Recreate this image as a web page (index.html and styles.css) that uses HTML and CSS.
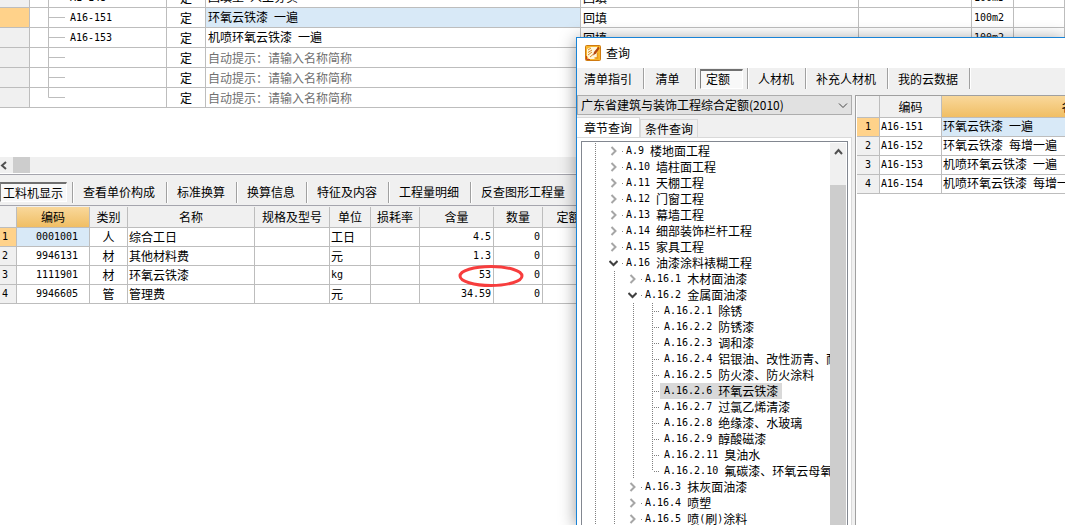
FILE: index.html
```html
<!DOCTYPE html>
<html lang="zh-CN">
<head>
<meta charset="utf-8">
<title>查询</title>
<link rel="stylesheet" href="styles.css">
</head>
<body>
<svg class="defs" aria-hidden="true">
  <symbol id="branch" viewBox="0 0 17 20"><path d="M.5 0V20M0 9.500H17" stroke="#bdbdbd" fill="none"/></symbol>
  <symbol id="branch-end" viewBox="0 0 17 20"><path d="M.5 0V9.500H17" stroke="#bdbdbd" fill="none"/></symbol>
  <symbol id="closed" viewBox="0 0 9 10"><path d="M2.500 1L6.500 5L2.500 9" stroke="#a6a6a6" stroke-width="2" fill="none"/></symbol>
  <symbol id="open" viewBox="0 0 9 10"><path d="M.5 3L4.500 7L8.500 3" stroke="#404040" stroke-width="2" fill="none"/></symbol>
</svg>
<main class="app">
  <section class="items">
    <table class="grid items-grid">
      <colgroup><col class="w30"><col class="w137"><col class="w39"><col class="w375"><col class="w278"><col class="w113"><col class="w42"><col></colgroup>
      <tbody>
      <tr><th></th><td class="code"><div class="node"><svg class="twig"><use href="#branch"/></svg><span class="n">A1-148</span></div></td><td class="mid">定</td><td>回填土<span class="n"> </span>人工夯实</td><td>回填</td><td></td><td class="n">100m3</td><td></td></tr>
      <tr><th class="on"></th><td class="code"><div class="node"><svg class="twig"><use href="#branch"/></svg><span class="n">A16-151</span></div></td><td class="mid">定</td><td class="sel">环氧云铁漆<span class="n"> </span>一遍</td><td>回填</td><td></td><td class="n">100m2</td><td></td></tr>
      <tr><th></th><td class="code"><div class="node"><svg class="twig"><use href="#branch"/></svg><span class="n">A16-153</span></div></td><td class="mid">定</td><td>机喷环氧云铁漆<span class="n"> </span>一遍</td><td>回填</td><td></td><td class="n">100m2</td><td></td></tr>
      <tr><th></th><td class="code"><div class="node"><svg class="twig"><use href="#branch"/></svg></div></td><td class="mid">定</td><td class="hint">自动提示：请输入名称简称</td><td></td><td></td><td></td><td></td></tr>
      <tr><th></th><td class="code"><div class="node"><svg class="twig"><use href="#branch"/></svg></div></td><td class="mid">定</td><td class="hint">自动提示：请输入名称简称</td><td></td><td></td><td></td><td></td></tr>
      <tr><th></th><td class="code"><div class="node"><svg class="twig"><use href="#branch-end"/></svg></div></td><td class="mid">定</td><td class="hint">自动提示：请输入名称简称</td><td></td><td></td><td></td><td></td></tr>
      </tbody>
    </table>
    <div class="hbar">
      <button class="arrow" aria-label="向左滚动"><svg width="8" height="9" viewBox="0 0 8 9"><path d="M6 1L2 4.500L6 8" stroke="#505050" stroke-width="2" fill="none"/></svg></button>
      <div class="thumb"></div>
    </div>
  </section>
  <nav class="tools">
    <div class="tool first"><button class="pressed">工料机显示</button></div>
    <div class="tool"><button>查看单价构成</button></div>
    <div class="tool"><button>标准换算</button></div>
    <div class="tool"><button>换算信息</button></div>
    <div class="tool"><button>特征及内容</button></div>
    <div class="tool"><button>工程量明细</button></div>
    <div class="tool last"><button>反查图形工程量</button></div>
  </nav>
  <section class="detail">
    <table class="grid detail-grid">
      <colgroup><col class="w17"><col class="w73"><col class="w38"><col class="w127"><col class="w75"><col class="w41"><col class="w49"><col class="w74"><col class="w49"><col class="w64"></colgroup>
      <thead><tr><th></th><th class="gold">编码</th><th>类别</th><th>名称</th><th>规格及型号</th><th>单位</th><th>损耗率</th><th>含量</th><th>数量</th><th>定额价</th></tr></thead>
      <tbody>
      <tr><th class="on n idx">1</th><td class="num n sel">0001001</td><td class="mid">人</td><td>综合工日</td><td></td><td>工日</td><td></td><td class="right n">4.5</td><td class="right n">0</td><td></td></tr>
      <tr><th class="n idx">2</th><td class="num n">9946131</td><td class="mid">材</td><td>其他材料费</td><td></td><td>元</td><td></td><td class="right n">1.3</td><td class="right n">0</td><td></td></tr>
      <tr><th class="n idx">3</th><td class="num n">1111901</td><td class="mid">材</td><td>环氧云铁漆</td><td></td><td class="n">kg</td><td></td><td class="right n">53</td><td class="right n">0</td><td></td></tr>
      <tr><th class="n idx">4</th><td class="num n">9946605</td><td class="mid">管</td><td>管理费</td><td></td><td>元</td><td></td><td class="right n">34.59</td><td class="right n">0</td><td></td></tr>
      </tbody>
    </table>
    <svg class="mark" width="68" height="24" viewBox="0 0 68 24"><ellipse cx="33" cy="12" rx="31" ry="9.500" fill="none" stroke="#f73d3d" stroke-width="3"/></svg>
  </section>
</main>

<section class="dialog" role="dialog" aria-labelledby="dialog-title">
  <header class="title">
    <svg width="16" height="16" viewBox="0 0 16 16"><rect x=".5" y=".5" width="15" height="15" rx="1" fill="#f8b62d" stroke="#cf7a10"/><path d="M2 4L6 2H12V12L10 14H4L2 11Z" fill="#fff6dc"/><path d="M3 5L6 3M3 7.500L7 5M3 10L7 7M5 12L8 9.500" stroke="#d98a24"/><path d="M13.500 1.500L9 7L8 10.500L11 8.500L14.500 3.500Z" fill="#b5480f"/><path d="M1.500 11V14.500H5" stroke="#c9401a" fill="none"/><path d="M12.500 8V13H9.500" stroke="#e89a18" stroke-width="1.500" fill="none"/></svg>
    <h1 id="dialog-title">查询</h1>
  </header>
  <nav class="tools dialog-tools">
    <div class="tool"><button>清单指引</button></div>
    <div class="tool"><button>清单</button></div>
    <div class="tool"><button class="pressed">定额</button></div>
    <div class="tool"><button>人材机</button></div>
    <div class="tool"><button>补充人材机</button></div>
    <div class="tool"><button>我的云数据</button></div>
  </nav>
  <div class="body">
    <div class="side">
      <div class="combo">
        <select aria-label="定额库"><option>广东省建筑与装饰工程综合定额(2010)</option></select>
        <svg width="10" height="6" viewBox="0 0 10 6"><path d="M1 .5L5 4.500L9 .5" stroke="#444" fill="none"/></svg>
      </div>
      <div class="tabs"><button class="tab active">章节查询</button><button class="tab">条件查询</button></div>
      <div class="pane">
        <div class="treebox">
          <ul class="tree">
            <li><div class="row"><svg><use href="#closed"/></svg><i></i><span class="n">A.9 </span>楼地面工程</div></li>
            <li><div class="row"><svg><use href="#closed"/></svg><i></i><span class="n">A.10 </span>墙柱面工程</div></li>
            <li><div class="row"><svg><use href="#closed"/></svg><i></i><span class="n">A.11 </span>天棚工程</div></li>
            <li><div class="row"><svg><use href="#closed"/></svg><i></i><span class="n">A.12 </span>门窗工程</div></li>
            <li><div class="row"><svg><use href="#closed"/></svg><i></i><span class="n">A.13 </span>幕墙工程</div></li>
            <li><div class="row"><svg><use href="#closed"/></svg><i></i><span class="n">A.14 </span>细部装饰栏杆工程</div></li>
            <li><div class="row"><svg><use href="#closed"/></svg><i></i><span class="n">A.15 </span>家具工程</div></li>
            <li><div class="row"><svg><use href="#open"/></svg><i></i><span class="n">A.16 </span>油漆涂料裱糊工程</div>
              <ul class="level2">
                <li><div class="row"><svg><use href="#closed"/></svg><i></i><span class="n">A.16.1 </span>木材面油漆</div></li>
                <li><div class="row"><svg><use href="#open"/></svg><i></i><span class="n">A.16.2 </span>金属面油漆</div>
                  <ul class="level3">
                    <li><div class="row"><b></b><span class="leaf"><span class="n">A.16.2.1 </span>除锈</span></div></li>
                    <li><div class="row"><b></b><span class="leaf"><span class="n">A.16.2.2 </span>防锈漆</span></div></li>
                    <li><div class="row"><b></b><span class="leaf"><span class="n">A.16.2.3 </span>调和漆</span></div></li>
                    <li><div class="row"><b></b><span class="leaf"><span class="n">A.16.2.4 </span>铝银油、改性沥青、耐酸漆</span></div></li>
                    <li><div class="row"><b></b><span class="leaf"><span class="n">A.16.2.5 </span>防火漆、防火涂料</span></div></li>
                    <li><div class="row"><b></b><span class="leaf current"><span class="n">A.16.2.6 </span>环氧云铁漆</span></div></li>
                    <li><div class="row"><b></b><span class="leaf"><span class="n">A.16.2.7 </span>过氯乙烯清漆</span></div></li>
                    <li><div class="row"><b></b><span class="leaf"><span class="n">A.16.2.8 </span>绝缘漆、水玻璃</span></div></li>
                    <li><div class="row"><b></b><span class="leaf"><span class="n">A.16.2.9 </span>醇酸磁漆</span></div></li>
                    <li><div class="row"><b></b><span class="leaf"><span class="n">A.16.2.11 </span>臭油水</span></div></li>
                    <li><div class="row"><b></b><span class="leaf"><span class="n">A.16.2.10 </span>氟碳漆、环氧云母氧化铁漆</span></div></li>
                  </ul>
                </li>
                <li><div class="row"><svg><use href="#closed"/></svg><i></i><span class="n">A.16.3 </span>抹灰面油漆</div></li>
                <li><div class="row"><svg><use href="#closed"/></svg><i></i><span class="n">A.16.4 </span>喷塑</div></li>
                <li><div class="row"><svg><use href="#closed"/></svg><i></i><span class="n">A.16.5 </span>喷<span class="n">(</span>刷<span class="n">)</span>涂料</div></li>
              </ul>
            </li>
          </ul>
          <div class="vbar">
            <button class="arrow" aria-label="向上滚动"><svg width="9" height="8" viewBox="0 0 9 8"><path d="M1 6L4.500 2L8 6" stroke="#505050" stroke-width="2" fill="none"/></svg></button>
            <div class="thumb"></div>
          </div>
        </div>
      </div>
    </div>
    <div class="results">
      <table class="grid result-grid">
        <colgroup><col class="w23"><col class="w62"><col class="w264"></colgroup>
        <thead><tr><th></th><th>编码</th><th class="gold">名称</th></tr></thead>
        <tbody>
        <tr><th class="on n">1</th><td class="n">A16-151</td><td class="sel">环氧云铁漆<span class="n"> </span>一遍</td></tr>
        <tr><th class="n">2</th><td class="n">A16-152</td><td>环氧云铁漆<span class="n"> </span>每增一遍</td></tr>
        <tr><th class="n">3</th><td class="n">A16-153</td><td>机喷环氧云铁漆<span class="n"> </span>一遍</td></tr>
        <tr><th class="n">4</th><td class="n">A16-154</td><td>机喷环氧云铁漆<span class="n"> </span>每增一遍</td></tr>
        </tbody>
      </table>
    </div>
  </div>
</section>
</body>
</html>
```

FILE: styles.css
```css
* { box-sizing: border-box; }
body {
  margin: 0;
  height: 100vh;
  overflow: hidden;
  position: relative;
  background: #fff;
  color: #000;
  font: 12px/16px "Noto Sans CJK SC", sans-serif;
}
button, select { font: inherit; color: inherit; white-space: nowrap; }
button { border: 0; padding: 0; background: none; }
.defs { display: none; }
.n { font-family: "DejaVu Sans Mono", monospace; font-size: 10px; white-space: pre; }

.app { display: flex; flex-direction: column; height: 100%; overflow: hidden; }

/* Data grids */
.grid { table-layout: fixed; border-collapse: separate; border-spacing: 0; }
.grid th, .grid td {
  height: 19px;
  padding: 0 0 0 1px;
  border-right: 1px solid #bdbdbd;
  border-bottom: 1px solid #bdbdbd;
  text-align: left;
  font-weight: normal;
  line-height: 16px;
  white-space: nowrap;
  overflow: hidden;
}
.grid th { background: #f0f0f0; text-align: center; padding: 0; }
.grid thead th { height: 21px; }
.grid .gold { background: linear-gradient(#f9d89b, #f0be64); }
.grid .on { background: #ffd28a; }
.grid .sel { background: #d8e9f7; }
.grid .mid { text-align: center; padding: 0; }
.grid .hint { color: #707070; }
.grid .right { text-align: right; padding-right: 2px; }
.grid .num { text-align: center; padding-left: 8px; }
.grid .idx { text-align: left; padding-left: 2px; }

.w17 { width: 17px; } .w23 { width: 23px; } .w30 { width: 30px; }
.w38 { width: 38px; } .w39 { width: 39px; } .w41 { width: 41px; }
.w42 { width: 42px; } .w49 { width: 49px; } .w62 { width: 62px; }
.w64 { width: 64px; } .w73 { width: 73px; } .w74 { width: 74px; }
.w75 { width: 75px; } .w113 { width: 113px; } .w127 { width: 127px; }
.w137 { width: 137px; } .w264 { width: 264px; } .w278 { width: 278px; }
.w375 { width: 375px; }

.items { border-bottom: 1px solid #a5a5ad; padding-bottom: 1px; overflow: hidden; flex: none; }
.items-grid { width: 100%; margin: -12px 0 49px; }
.items-grid th, .items-grid td { height: 20px; padding-left: 2px; }
.items-grid th:first-child { border-bottom-color: #bdbdbd; }
.grid .code { padding: 0 0 0 18px; }
.node { display: flex; align-items: center; gap: 5px; height: 19px; }
.twig { width: 17px; height: 20px; flex: none; }

.hbar { display: flex; align-items: stretch; height: 16px; background: #f0f0f0; }
.hbar .arrow { width: 13px; display: flex; align-items: center; }
.hbar .thumb { width: 17px; background: #cdcdcd; }

/* Tool strips */
.tools { display: flex; align-items: center; background: #f0f0f0; flex: none; height: 31px; padding-top: 4px; border-bottom: 1px solid #a5a5ad; }
.tool {
  display: flex;
  align-items: center;
  justify-content: center;
  height: 21px;
  padding: 0 11px 0 10px;
  border-right: 1px solid #a0a0a0;
  box-shadow: 1px 0 #fff;
  flex: none;
}
.tool.first { padding: 0 5px 0 0; }
.tool.last { border: 0; box-shadow: none; }
.pressed {
  height: 20px;
  padding: 0 3px 0 2px;
  border: 1px solid #fff;
  border-top: 2px solid #707070;
  border-left: 1px solid #808080;
  background: #f8f8f8;
}
.detail { position: relative; flex: 1; border-top: 1px solid #f0f0f0; }
.detail-grid { width: 607px; }
.mark { position: absolute; left: 458px; top: 57px; }

/* Query window */
.dialog {
  position: absolute;
  left: 576px;
  top: 37px;
  right: 0;
  bottom: 0;
  display: flex;
  flex-direction: column;
  overflow: hidden;
  background: #f0f0f0;
  border-top: 1px solid #1883d7;
  border-left: 1px solid #1883d7;
  box-shadow: 0 2px 16px rgba(0, 0, 0, .4);
}
.title { display: flex; align-items: center; gap: 5px; height: 30px; padding-left: 8px; background: #fff; flex: none; }
.title h1 { margin: 0; font-size: 12px; font-weight: normal; }
.dialog-tools { height: 27px; padding: 0; border: 0; align-items: flex-start; }
.dialog-tools .tool { min-width: 52px; padding-left: 7px; }
.dialog-tools .tool:nth-child(3) { padding: 0 4px; }
.dialog-tools .tool:nth-child(n+4) { padding: 0 11px 0 10px; }
.dialog-tools .pressed { padding: 0 12px 0 5px; }

.body { display: flex; flex: 1; min-height: 0; gap: 3px; }
.side { display: flex; flex-direction: column; width: 275px; flex: none; min-height: 0; }
.combo { position: relative; display: flex; height: 20px; flex: none; }
.combo select { appearance: none; width: 100%; height: 20px; padding: 0 20px 0 3px; border: 1px solid #adadad; border-radius: 0; background: #e1e1e1; }
.combo svg { position: absolute; right: 4px; top: 8px; pointer-events: none; }
.tabs { display: flex; align-items: flex-end; height: 22px; padding-top: 2px; flex: none; }
.tab { height: 18px; padding: 0 4px; border: 1px solid #d9d9d9; border-bottom: 0; background: #f0f0f0; line-height: 16px; }
.tab.active { height: 20px; padding: 0 7px; background: #fff; border-left: 0; }
.pane { flex: 1; min-height: 0; display: flex; padding: 3px 3px 0 4px; background: #fff; border-right: 1px solid #d9d9d9; border-top: 1px solid #d9d9d9; }
.treebox { flex: 1; min-width: 0; display: flex; border: 1px solid #828790; border-bottom: 0; padding: 1px 1px 0 0; overflow: hidden; }
.vbar { width: 16px; flex: none; display: flex; flex-direction: column; background: #f0f0f0; }
.vbar .arrow { height: 42px; padding-bottom: 24px; display: flex; align-items: center; justify-content: center; }
.vbar .thumb { flex: 1; background: #cdcdcd; }

.tree, .tree ul { list-style: none; margin: 0; padding: 0; }
.tree, .level2, .level3 {
  --dots: repeating-linear-gradient(#808080 0 1px, transparent 1px 2px);
  background: var(--dots) 13px 0 / 1px 100% no-repeat;
}
.tree { flex: 1; min-width: 0; overflow: hidden; }
.tree .level2 { background-position: 32px 0; }
.tree .level3 {
  background: var(--dots) 51px 0 / 1px 100% no-repeat, var(--dots) 70px 0 / 1px calc(100% - 8px) no-repeat;
}
.row { display: flex; align-items: center; height: 16px; padding-left: 27px; white-space: nowrap; }
.row svg { width: 9px; height: 10px; flex: none; }
.row i { width: 1px; height: 1px; margin: 0 3px 0 4px; background: #808080; flex: none; }
.level2 .row { padding-left: 46px; }
.level3 .row { padding-left: 71px; }
.row b { width: 7px; height: 1px; flex: none; background: repeating-linear-gradient(90deg, transparent 0 1px, #808080 1px 2px); }
.leaf { display: flex; align-items: center; height: 16px; padding: 0 4px; }
.current { background: #d9d9d9; }

.results { flex: 1; min-width: 0; overflow: hidden; background: #fff; border-top: 1px solid #a0a0a0; border-left: 1px solid #a0a0a0; padding-left: 1px; }
.result-grid { width: 349px; }
.result-grid thead th { height: 22px; }
```
